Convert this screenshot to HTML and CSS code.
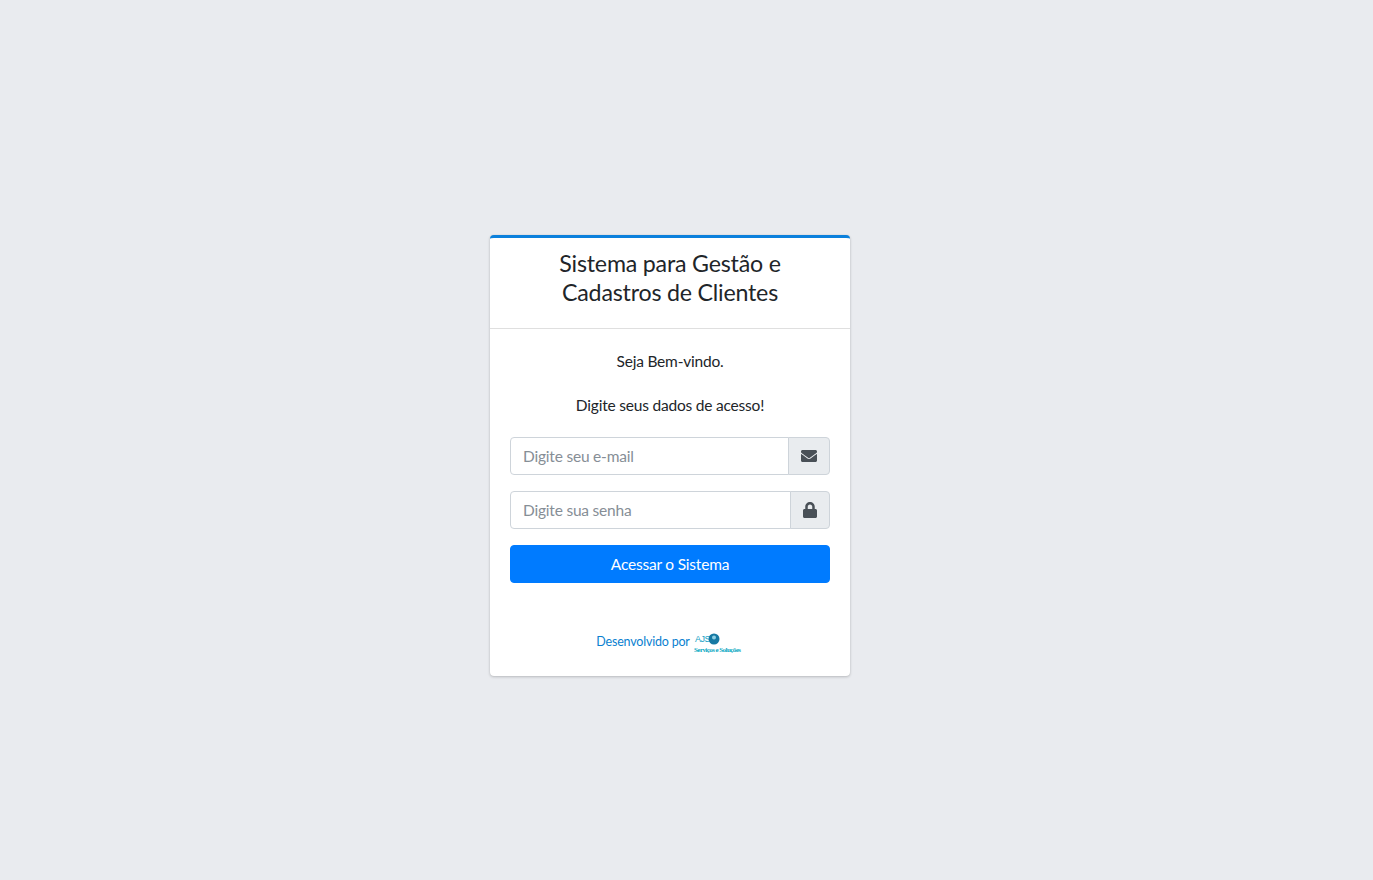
FILE: index.html
```html
<!DOCTYPE html>
<html lang="pt-BR">
<head>
  <meta charset="UTF-8" />
  <meta name="viewport" content="width=device-width, initial-scale=1.0" />
  <title>Sistema para Gestão e Cadastros de Clientes</title>
  <link rel="stylesheet" href="styles.css">
</head>
<body>
  <div class="login-box">
    <div class="card-header">
      <h1>Sistema para Gestão e<br />Cadastros de Clientes</h1>
    </div>
    <form class="card-body">
      <p class="login-msg">Seja Bem-vindo.</p>
      <p class="login-msg">Digite seus dados de acesso!</p>

      <div class="input-group">
        <input type="email" placeholder="Digite seu e-mail" />
        <span class="input-icon">
          <svg class="icon-envelope" viewBox="0 0 512 512"><path d="M502.3 190.8c3.9-3.1 9.7-.2 9.7 4.7V400c0 26.5-21.5 48-48 48H48c-26.5 0-48-21.5-48-48V195.6c0-5 5.7-7.8 9.7-4.7 22.4 17.4 52.1 39.5 154.1 113.6 21.1 15.4 56.7 47.8 92.2 47.6 35.7.3 72-32.8 92.3-47.6 102-74.1 131.6-96.3 154-113.7zM256 320c23.2.4 56.6-29.2 73.4-41.4 132.7-96.3 142.8-104.7 173.4-128.7 5.8-4.5 9.2-11.5 9.2-18.9v-19c0-26.5-21.5-48-48-48H48C21.5 64 0 85.5 0 112v19c0 7.4 3.4 14.3 9.2 18.9 30.6 23.9 40.7 32.4 173.4 128.7 16.8 12.2 50.2 41.8 73.4 41.4z"/></svg>
        </span>
      </div>

      <div class="input-group">
        <input type="password" placeholder="Digite sua senha" />
        <span class="input-icon">
          <svg class="icon-lock" viewBox="0 0 448 512"><path d="M400 224h-24v-72C376 68.2 307.8 0 224 0S72 68.2 72 152v72H48c-26.5 0-48 21.5-48 48v192c0 26.5 21.5 48 48 48h352c26.5 0 48-21.5 48-48V272c0-26.5-21.5-48-48-48zm-104 0H152v-72c0-39.7 32.3-72 72-72s72 32.3 72 72v72z"/></svg>
        </span>
      </div>

      <button type="button" class="btn-login">Acessar o Sistema</button>

      <div class="credit">
        <span>Desenvolvido por</span>
        <svg class="credit-logo" viewBox="0 -2 48 23">
          <text x="1" y="10" class="logo-ajs">AJS</text>
          <circle cx="20" cy="7" r="5.5" fill="#1679a3" />
          <circle cx="20" cy="5.5" r="2" fill="#8fd0e4" />
          <text x="0" y="20" textLength="47" class="logo-name">Serviços e Soluções</text>
        </svg>
      </div>
    </form>
  </div>
</body>
</html>
```

FILE: styles.css
```css
* {
  box-sizing: border-box;
}

body {
  margin: 0;
  height: 100vh;
  display: flex;
  justify-content: center;
  align-items: center;
  background-color: #e9ebef;
  color: #212529;
  font-family: "Lato", "Noto Sans", sans-serif;
  font-size: 15.5px;
  letter-spacing: -0.013em;
  line-height: 24px;
}

.login-box {
  width: 360px;
  margin: 31px 33px 0 0;
  background: #fff;
  border-top: 3px solid #0b80dc;
  border-radius: 4px;
  box-shadow: 0 0 1px rgba(0, 0, 0, 0.125), 0 1px 3px rgba(0, 0, 0, 0.2);
}

.card-header {
  padding: 11px 20px 12px;
  border-bottom: 1px solid rgba(0, 0, 0, 0.125);
  text-align: center;
}

.card-header h1 {
  margin: 0 0 10px;
  font-size: 23.2px;
  font-weight: 400;
  line-height: 28.8px;
}

.card-body {
  display: block;
  padding: 20px;
}

.login-msg {
  margin: 0 0 20px;
  text-align: center;
}

.input-group {
  display: flex;
  height: 38px;
  margin-bottom: 16px;
}

.input-group input {
  flex: 1;
  min-width: 0;
  padding: 6px 12px;
  border: 1px solid #ced4da;
  border-radius: 4px 0 0 4px;
  color: #495057;
  font: inherit;
  letter-spacing: inherit;
  outline: none;
}

.input-group input::placeholder {
  color: #868e96;
  opacity: 1;
}

.input-icon {
  display: flex;
  align-items: center;
  margin-left: -1px;
  padding: 6px 12px;
  background-color: #e9ecef;
  border: 1px solid #ced4da;
  border-radius: 0 4px 4px 0;
}

.input-icon svg {
  display: block;
  fill: #495057;
}

.icon-envelope {
  width: 16px;
  height: 16px;
}

.icon-lock {
  width: 14px;
  height: 16px;
}

.btn-login {
  display: block;
  width: 100%;
  height: 38px;
  padding: 6px 12px;
  background-color: #007bff;
  border: 1px solid #007bff;
  border-radius: 4px;
  color: #fff;
  font: inherit;
  letter-spacing: inherit;
  cursor: pointer;
}

.credit {
  display: flex;
  justify-content: center;
  align-items: center;
  gap: 4px;
  margin: 47px 0 3px;
  padding-right: 2px;
  color: #0a7fd0;
  font-size: 12.5px;
  line-height: 21px;
}

.credit-logo {
  display: block;
  flex: none;
  width: 48px;
  height: 23px;
}

.logo-ajs {
  fill: #12a0c4;
  font-family: "Liberation Sans", sans-serif;
  font-size: 9px;
  letter-spacing: -0.5px;
}

.logo-name {
  fill: #0aa8c2;
  font-family: "Liberation Serif", serif;
  font-size: 7px;
  font-weight: 700;
  letter-spacing: 0;
}
```
